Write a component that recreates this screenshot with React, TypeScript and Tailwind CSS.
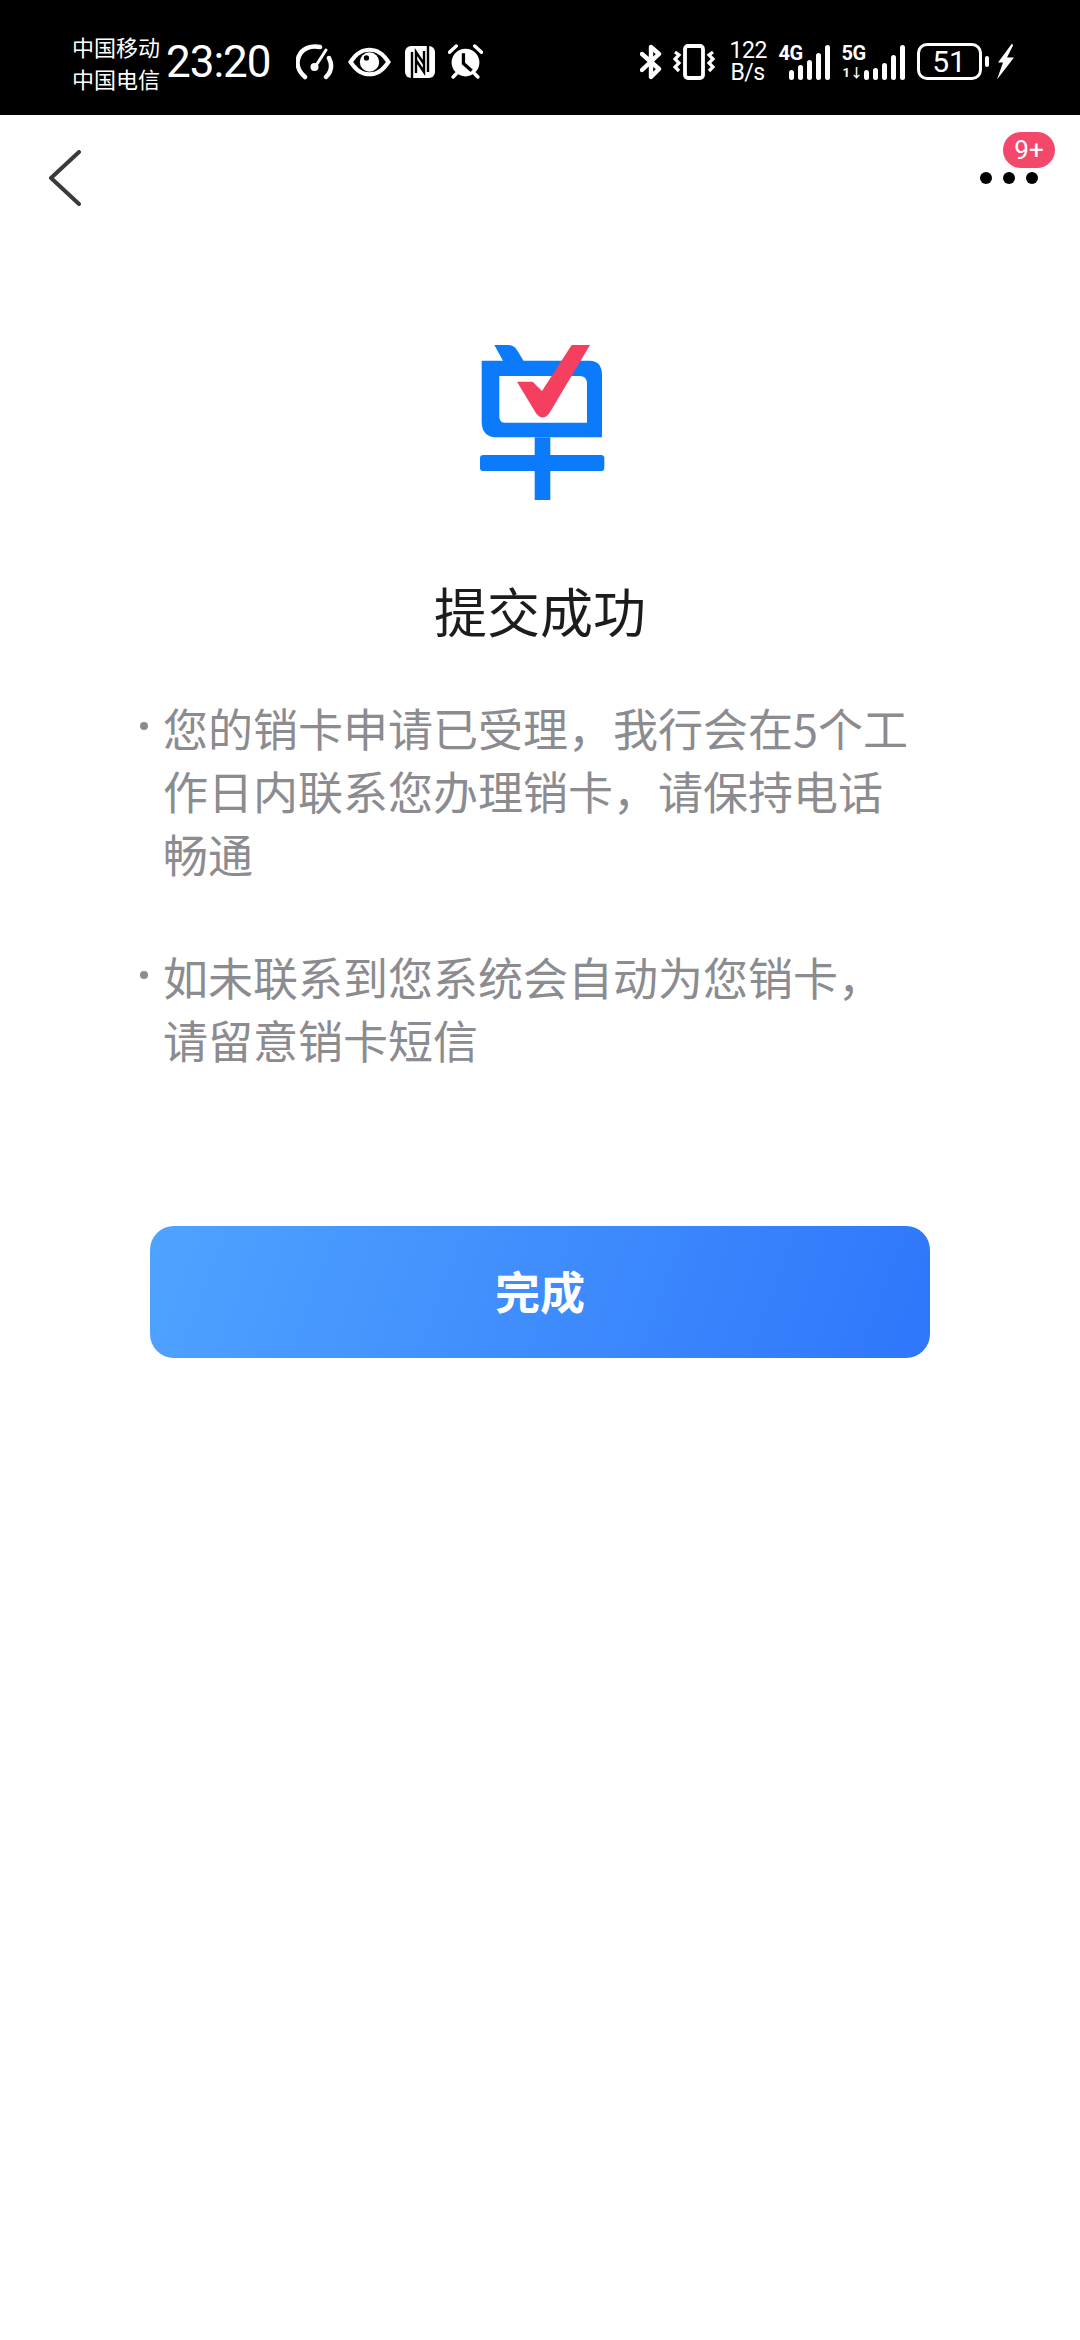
import React from "react";

const cjk = { fontFamily: '"Noto Sans CJK SC", "Noto Sans", sans-serif' };

function Gauge() {
  return (
    <svg width="38" height="36" viewBox="0 0 38 36" fill="none" stroke="white" strokeLinecap="round" className="ml-[25px]">
      <path d="M9 33 C2 27 0 19 3 12 C6 5 14 1 24 3" strokeWidth="4.5" />
      <path d="M33 14 C36 20 36 27 30 33" strokeWidth="4.5" />
      <path d="M30 6 L21 20" strokeWidth="3" />
      <circle cx="18.5" cy="23" r="4" fill="white" stroke="none" />
    </svg>
  );
}

function Eye() {
  return (
    <svg width="45" height="32" viewBox="0 0 44 30" className="ml-[13px]">
      <path d="M1 15 C8 4 15 1 22 1 C29 1 36 4 43 15 C36 26 29 29 22 29 C15 29 8 26 1 15 Z" fill="white" />
      <path d="M6 15 C11 8 16 5 22 5 C28 5 33 8 38 15 C33 22 28 25 22 25 C16 25 11 22 6 15 Z" fill="black" />
      <circle cx="22" cy="15" r="9.5" fill="white" />
      <circle cx="19" cy="11" r="2.6" fill="black" />
    </svg>
  );
}

function Nfc() {
  return (
    <svg width="30" height="34" viewBox="0 0 30 32" className="ml-[13px]">
      <rect x="0" y="0" width="30" height="32" rx="6" fill="white" />
      <path d="M7 32 V6 M23 0 V26" fill="none" stroke="black" strokeWidth="2.4" />
      <path d="M11 27 V14 L19 26 V18 M19 5 V18 L11 6 V14" fill="none" stroke="black" strokeWidth="2.4" />
    </svg>
  );
}

function Alarm() {
  return (
    <svg width="35" height="35" viewBox="0 0 34 34" className="ml-[13px]">
      <circle cx="17" cy="18" r="13.5" fill="white" />
      <path d="M1.5 8 L8 2 M32.5 8 L26 2 M5 32 L8 29 M29 32 L26 29" stroke="white" strokeWidth="3.4" strokeLinecap="round" />
      <path d="M15 9 V19 L23 26" fill="none" stroke="black" strokeWidth="3.2" />
    </svg>
  );
}

function Bluetooth() {
  return (
    <svg width="22" height="36" viewBox="0 0 22 36" fill="none" stroke="white" strokeWidth="4.4" strokeLinejoin="round" strokeLinecap="round">
      <path d="M2 10 L19 25 L11 33 V3 L19 10 L2 26" />
    </svg>
  );
}

function Vibrate() {
  return (
    <svg width="42" height="36" viewBox="0 0 42 36" fill="none" stroke="white" className="ml-[11px]">
      <rect x="12" y="2" width="18" height="32" rx="3" strokeWidth="3.8" />
      <path d="M2 8 L6 11 L2 15 L6 19 L2 23 L6 27" strokeWidth="3.2" />
      <path d="M40 8 L36 11 L40 15 L36 19 L40 23 L36 27" strokeWidth="3.2" />
    </svg>
  );
}

function Bars({ heights }: { heights: number[] }) {
  return (
    <div className="flex items-end gap-[4px]">
      {heights.map((h, i) => (
        <div key={i} className="w-[5px] rounded-[3px] bg-white" style={{ height: h }} />
      ))}
    </div>
  );
}

function Bolt() {
  return (
    <svg width="17" height="37" viewBox="0 0 17 36" className="ml-[8px]">
      <path d="M15 0 L1 19 H6 L0 36 L17 14 H10 L16 2 Z" fill="white" />
    </svg>
  );
}

function StatusBar() {
  return (
    <div className="flex h-[115px] items-center bg-black pl-[72px] pt-[8px] text-white" style={{ fontFamily: '"Roboto", "Noto Sans CJK SC", sans-serif' }}>
      <div className="flex w-[94px] flex-col text-[22px] leading-[32px]" style={cjk}>
        <span className="whitespace-nowrap">中国移动</span>
        <span className="whitespace-nowrap">中国电信</span>
      </div>
      <span className="text-[44px] leading-none tracking-[-1px]">23:20</span>
      <Gauge />
      <Eye />
      <Nfc />
      <Alarm />
      <div className="ml-[157px] flex items-center">
        <Bluetooth />
        <Vibrate />
        <div className="ml-[15px] w-[36px] text-center text-[23px] leading-[22px] tracking-[-0.5px]">
          122
          <br />
          B/s
        </div>
        <div className="relative ml-[13px] flex h-[36px] w-[51px] items-end justify-end">
          <span className="absolute left-0 top-[-3px] text-[20px] font-bold leading-[24px] tracking-[-0.5px]">4G</span>
          <Bars heights={[10, 15, 20, 27, 35]} />
        </div>
        <div className="relative ml-[12px] flex h-[36px] w-[63px] items-end justify-end">
          <span className="absolute left-0 top-[-3px] text-[20px] font-bold leading-[24px] tracking-[-0.5px]">5G</span>
          <span className="absolute bottom-[0px] left-[1px] text-[13px] font-bold leading-[14px]">1↓</span>
          <Bars heights={[10, 12, 17, 25, 35]} />
        </div>
        <div className="ml-[12px] flex h-[37px] w-[65px] items-center justify-center rounded-[10px] border-[3px] border-white text-[30px] leading-none">
          51
        </div>
        <div className="ml-[3px] h-[11px] w-[4px] rounded-[2px] bg-white" />
        <Bolt />
      </div>
    </div>
  );
}

function NavBar() {
  return (
    <div className="flex h-[126px] items-center justify-between pl-[48px] pr-[42px]">
      <svg width="34" height="56" viewBox="0 0 34 56" fill="none" stroke="#3a3a3c" strokeWidth="4" strokeLinecap="round" strokeLinejoin="round">
        <path d="M31 2 L3 28 L31 54" />
      </svg>
      <div className="relative flex gap-[11px]">
        <div className="h-[12px] w-[12px] rounded-full bg-black" />
        <div className="h-[12px] w-[12px] rounded-full bg-black" />
        <div className="h-[12px] w-[12px] rounded-full bg-black" />
        <div
          className="absolute left-[23px] top-[-40px] flex h-[36px] w-[52px] items-center justify-center rounded-[18px] bg-[#f4486a] text-[26px] leading-none text-white"
          style={{ fontFamily: '"Roboto", sans-serif' }}
        >
          9+
        </div>
      </div>
    </div>
  );
}

function Logo() {
  return (
    <svg width="200" height="200" viewBox="0 0 600 600">
      <g fill="#0b7bfb">
        <path
          fillRule="evenodd"
          d="M122 122 H445 Q483 122 483 165 V352 H170 Q122 352 122 305 Z M175 168 V290 Q175 308 193 308 H438 V192 Q438 168 416 168 Z"
        />
        <path d="M160 75 H200 Q218 75 228 90 L275 168 H200 L190 130 Z" />
        <rect x="281" y="352" width="47" height="188" />
        <rect x="117" y="405" width="373" height="48" rx="10" />
      </g>
      <path d="M228 185 H275 L303 213 L392 75 H447 L325 280 Q305 305 285 280 Z" fill="#f43f5f" />
    </svg>
  );
}

function Item({ lines }: { lines: string[] }) {
  return (
    <div className="flex">
      <div className="mr-[15px] mt-[26px] h-[8px] w-[8px] rounded-full bg-[#8b8b90]" />
      <div className="text-[45px] leading-[63px] text-[#8b8b90]">
        {lines.map((l) => (
          <div key={l} className="whitespace-nowrap">{l}</div>
        ))}
      </div>
    </div>
  );
}

export default function App() {
  return (
    <div className="flex min-h-[2340px] w-[1080px] flex-col bg-white" style={cjk}>
      <StatusBar />
      <NavBar />
      <div className="mt-[79px] flex flex-col items-center">
        <div className="ml-[2px] h-[200px] w-[200px]">
          <Logo />
        </div>
        <h1 className="mt-[54px] text-[53px] font-normal leading-[72px] text-[#1c1c1e]">提交成功</h1>
      </div>
      <div className="mt-[50px] flex flex-col gap-[60px] pl-[140px]">
        <Item lines={["您的销卡申请已受理，我行会在5个工", "作日内联系您办理销卡，请保持电话", "畅通"]} />
        <Item lines={["如未联系到您系统会自动为您销卡，", "请留意销卡短信"]} />
      </div>
      <button className="ml-[150px] mt-[155px] flex h-[132px] w-[780px] items-center justify-center rounded-[24px] bg-[linear-gradient(110deg,#4fa3ff,#2f76fb)] pb-[2px] text-[45px] font-bold text-white">
        完成
      </button>
    </div>
  );
}
